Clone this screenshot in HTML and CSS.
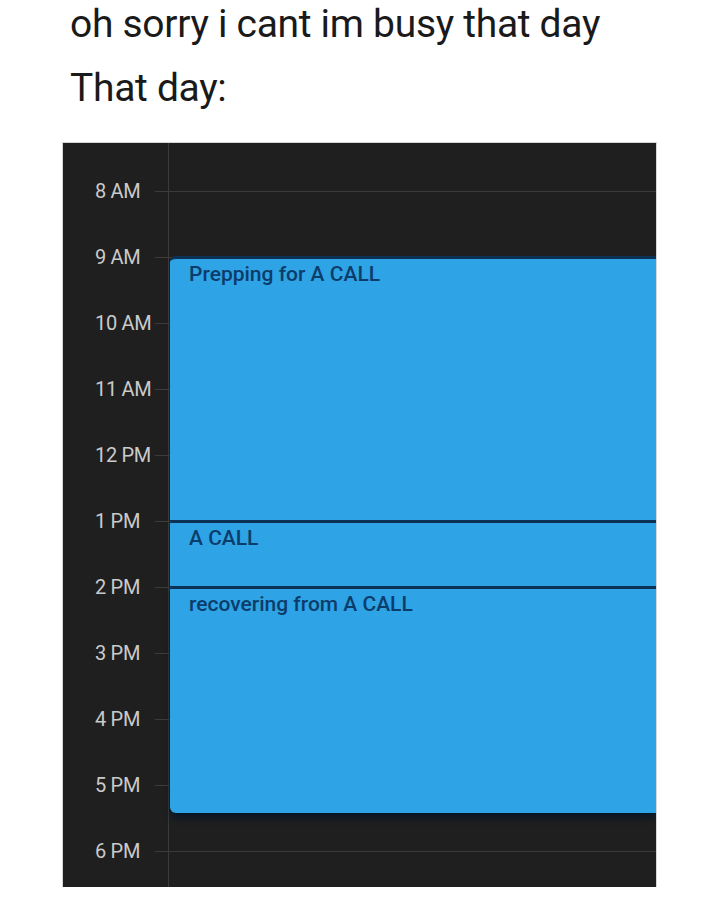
FILE: index.html
```html
<!DOCTYPE html>
<html>
<head>
<meta charset="utf-8">
<link rel="stylesheet" href="styles.css">
</head>
<body>
<div class="caption">
  <p class="line">oh sorry i cant im busy that day</p>
  <p class="line second">That day:</p>
</div>
<div class="panel">
  <div class="hours">
    <div class="hour"><span class="label">8 AM</span><span class="tick"></span><span class="rule"></span></div>
    <div class="hour"><span class="label">9 AM</span><span class="tick"></span><span class="rule"></span></div>
    <div class="hour"><span class="label">10 AM</span><span class="tick"></span><span class="rule"></span></div>
    <div class="hour"><span class="label">11 AM</span><span class="tick"></span><span class="rule"></span></div>
    <div class="hour"><span class="label">12 PM</span><span class="tick"></span><span class="rule"></span></div>
    <div class="hour"><span class="label">1 PM</span><span class="tick"></span><span class="rule"></span></div>
    <div class="hour"><span class="label">2 PM</span><span class="tick"></span><span class="rule"></span></div>
    <div class="hour"><span class="label">3 PM</span><span class="tick"></span><span class="rule"></span></div>
    <div class="hour"><span class="label">4 PM</span><span class="tick"></span><span class="rule"></span></div>
    <div class="hour"><span class="label">5 PM</span><span class="tick"></span><span class="rule"></span></div>
    <div class="hour"><span class="label">6 PM</span><span class="tick"></span><span class="rule"></span></div>
  </div>
  <div class="day">
    <div class="event first" style="top:113px;height:264px">Prepping for A CALL</div>
    <div class="event" style="top:377px;height:66px">A CALL</div>
    <div class="event last" style="top:443px;height:227px">recovering from A CALL</div>
  </div>
</div>
</body>
</html>
```

FILE: styles.css
```css
html, body {
  margin: 0;
  padding: 0;
  background: #ffffff;
}

.caption {
  padding-left: 70px;
  font-family: Roboto, "Liberation Sans", sans-serif;
  color: #1a1a1a;
}

.line {
  margin: 0;
  font-size: 39px;
  line-height: 48px;
  letter-spacing: -0.3px;
}

.line.second {
  margin-top: 16px;
}

.panel {
  position: relative;
  overflow: hidden;
  margin: 31px 0 0 63px;
  width: 593px;
  height: 744px;
  box-sizing: border-box;
  padding-top: 15px;
  background: #1f1f1f;
  box-shadow: 0 0 0 1px #d6d6d6;
  font-family: Roboto, "Liberation Sans", sans-serif;
}

.hours {
  display: flex;
  flex-direction: column;
}

.hour {
  display: flex;
  align-items: center;
  height: 66px;
}

.label {
  width: 60px;
  padding-left: 32px;
  font-size: 20px;
  color: #cacaca;
  white-space: nowrap;
  letter-spacing: -0.3px;
}

.tick {
  width: 13px;
  height: 1px;
  background: #3c3c3c;
}

.rule {
  flex: 1;
  height: 1px;
  background: #3a3a3a;
}

.day {
  position: absolute;
  top: 0;
  bottom: 0;
  left: 105px;
  right: 0;
  border-left: 1px solid #3a3a3a;
}

.event {
  position: absolute;
  left: 1px;
  right: 0;
  box-sizing: border-box;
  border-top: 3px solid #0b3254;
  background: #2ea3e5;
  padding: 3px 0 0 19px;
  font-size: 21px;
  font-weight: 500;
  color: #0c3d6a;
  line-height: 24px;
}

.event.first {
  border-top-left-radius: 6px;
}

.event.last {
  border-bottom-left-radius: 6px;
  box-shadow: 0 6px 6px -1px rgba(4, 22, 40, 0.9);
}
```
